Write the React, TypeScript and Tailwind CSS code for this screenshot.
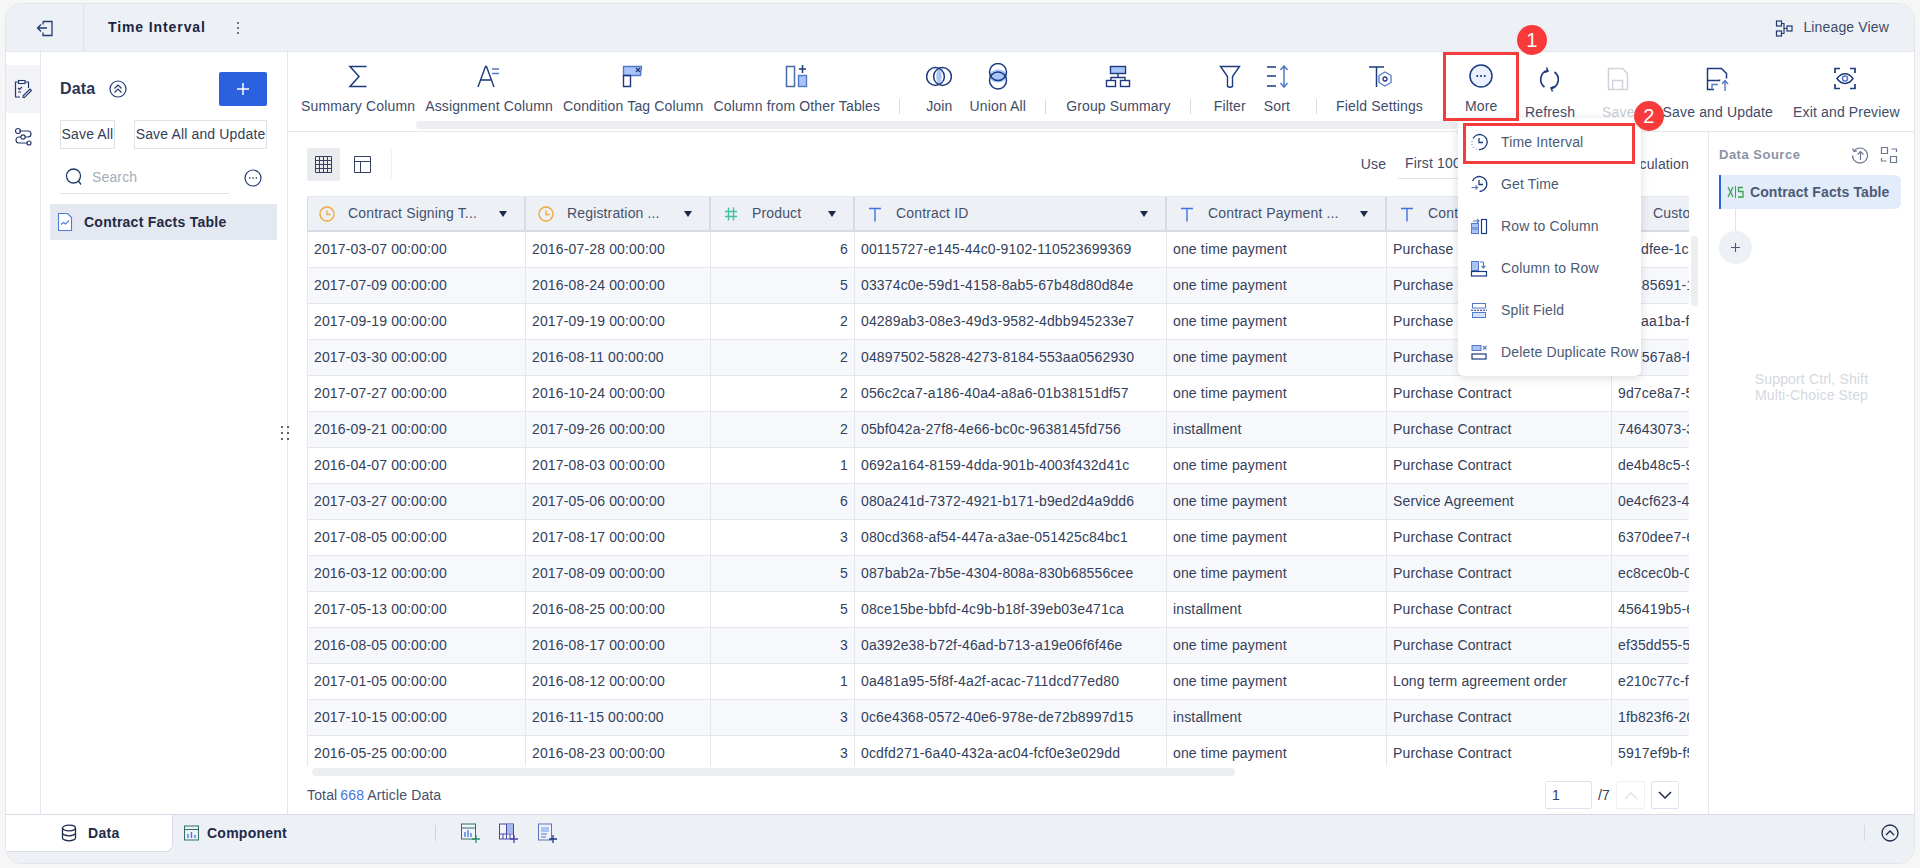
import type { ReactNode } from 'react'

const navy = '#1c3a7d'
const light = '#a9c5f8'
const mid = '#5478c8'

function Ic({ w = 24, h = 24, children, className = '' }: { w?: number; h?: number; children: ReactNode; className?: string }) {
  return (
    <svg width={w} height={h} viewBox={`0 0 ${w} ${h}`} fill="none" className={`shrink-0 ${className}`}>
      {children}
    </svg>
  )
}

const toolIcons: Record<string, ReactNode> = {
  sigma: <path d="M20.500 3.500H4l9 10-9 10h16.500" stroke={navy} strokeWidth="1.500" />,
  assign: (
    <>
      <path d="M2 24 9.500 3.500h1L18 24M4.500 17h11" stroke={navy} strokeWidth="1.400" />
      <path d="M16 6h7M16 10.500h7" stroke={mid} strokeWidth="1.500" />
    </>
  ),
  condition: (
    <>
      <path d="M2.500 3.500h18l-1 9h-17z" fill={light} stroke={mid} strokeWidth="1.400" />
      <path d="M2.500 12.500h7v11h-7z" stroke={navy} strokeWidth="1.400" />
      <path d="m15 5 4 4m0-4-4 4" stroke={navy} strokeWidth="1.200" />
    </>
  ),
  other: (
    <>
      <rect x="2.500" y="3.500" width="8" height="20" stroke="#4b6aa8" strokeWidth="1.500" />
      <rect x="14.500" y="12.500" width="8" height="11" fill={light} stroke={mid} strokeWidth="1.400" />
      <path d="M18.500 2v8M15 6h7" stroke={navy} strokeWidth="1.500" />
    </>
  ),
  join: (
    <>
      <path d="M13 5c3.600 4 3.600 13 0 17-3.600-4-3.600-13 0-17z" fill={light} />
      <circle cx="9.500" cy="13.500" r="8.900" stroke={navy} strokeWidth="1.500" />
      <circle cx="16.500" cy="13.500" r="8.900" stroke={navy} strokeWidth="1.500" />
    </>
  ),
  union: (
    <>
      <ellipse cx="12" cy="13" rx="9" ry="6.500" fill={light} />
      <circle cx="12" cy="9" r="8.500" stroke={navy} strokeWidth="1.500" />
      <circle cx="12" cy="17.500" r="8.500" stroke={navy} strokeWidth="1.500" />
    </>
  ),
  group: (
    <>
      <rect x="5.500" y="3.500" width="15" height="7" fill={light} stroke={navy} strokeWidth="1.400" />
      <rect x="1.500" y="17.500" width="9" height="6" stroke={navy} strokeWidth="1.400" />
      <rect x="15.500" y="17.500" width="9" height="6" stroke={navy} strokeWidth="1.400" />
      <path d="M13 10.500v4M6 17.500v-3h14v3" stroke={navy} strokeWidth="1.400" />
    </>
  ),
  filter: <path d="M2.500 3.500h19l-7 10v10l-2.500 1-2.500-1v-10z" stroke={navy} strokeWidth="1.400" />,
  sort: (
    <>
      <path d="M2 4h9M2 13h9M2 23h9" stroke={navy} strokeWidth="1.500" />
      <path d="M19 3v21m-3.500-17L19 3l3.500 4m-7 13 3.500 4 3.500-4" stroke={mid} strokeWidth="1.500" />
    </>
  ),
  field: (
    <>
      <path d="M1 4h15M8.500 4v20" stroke={navy} strokeWidth="1.500" />
      <path d="m17 9 6 3.500v7L17 23l-6-3.500v-7z" stroke={mid} strokeWidth="1.300" />
      <circle cx="17" cy="16" r="2" stroke={navy} strokeWidth="1.300" />
    </>
  ),
  more: (
    <>
      <circle cx="13" cy="13" r="11" fill="#eaf1fe" stroke={navy} strokeWidth="1.500" />
      <path d="M8.500 13h1.600M12.200 13h1.600M15.900 13h1.600" stroke={navy} strokeWidth="1.800" />
    </>
  ),
  refresh: (
    <>
      <path d="M10 4.500a9.500 9.500 0 0 0-2.500 16.500" stroke={navy} strokeWidth="1.700" />
      <path d="M15 22.500A9.500 9.500 0 0 0 17.500 6" stroke={navy} strokeWidth="1.700" />
      <path d="m9.500 1.500 1.500 3.500-3.500 1.500M15.500 25.500 14 22l3.500-1.500" stroke={navy} strokeWidth="1.500" />
    </>
  ),
  save: (
    <>
      <path d="M3.500 2.500h14l5 5v16h-19z" stroke="#cfd3db" strokeWidth="1.500" />
      <path d="M7.500 23.500v-9h10v9" stroke="#cfd3db" strokeWidth="1.500" />
    </>
  ),
  update: (
    <>
      <path d="M9 23.500H2.500v-21h14l5 5v5" stroke={navy} strokeWidth="1.500" />
      <path d="M2.500 14.500h12v-1" stroke={navy} strokeWidth="1.500" />
      <path d="M20 25v-10m-3 3 3-3.500 3 3.500" stroke={mid} strokeWidth="1.400" />
      <path d="M7 23.500v-5h6" stroke={mid} strokeWidth="1.400" />
    </>
  ),
  preview: (
    <>
      <path d="M2 7V2.500h5M17 2.500h5V7M2 18v4.500h5M17 22.500h5V18" stroke={navy} strokeWidth="1.700" />
      <path d="M4 12.500c4.500-6.500 11.500-6.500 16 0-4.500 6.500-11.500 6.500-16 0z" stroke={navy} strokeWidth="1.500" />
      <circle cx="12" cy="12.500" r="2.500" stroke={mid} strokeWidth="1.500" />
    </>
  ),
}

function ToolItem({ icon, label, w = 24, className = '' }: { icon: string; label: string; w?: number; className?: string }) {
  return (
    <div className={`flex shrink-0 flex-col items-center pt-[10px] ${className}`}>
      <div className="flex h-[28px] items-center justify-center">
        <Ic w={w} h={27}>
          {toolIcons[icon]}
        </Ic>
      </div>
      <span className="mt-[6px] text-[14px] leading-[20px] whitespace-nowrap text-[#3f4c68]">{label}</span>
    </div>
  )
}

function ActionItem({ icon, label, muted, className = '' }: { icon: string; label: string; muted?: boolean; className?: string }) {
  return (
    <div className={`flex shrink-0 flex-col items-center pt-[13px] ${className}`}>
      <div className="flex h-[28px] items-center justify-center">
        <Ic w={26} h={27}>
          {toolIcons[icon]}
        </Ic>
      </div>
      <span className={`mt-[9px] text-[14px] leading-[20px] whitespace-nowrap ${muted ? 'text-[#c9cdd6]' : 'text-[#3f4c68]'}`}>{label}</span>
    </div>
  )
}

function Sep({ className = '' }: { className?: string }) {
  return <div className={`mt-[47px] h-[15px] w-px shrink-0 bg-[#d8dbe3] ${className}`} />
}

function ClockIcon() {
  return (
    <Ic w={16} h={16}>
      <circle cx="8" cy="8" r="7" stroke="#f3a83d" strokeWidth="1.400" />
      <path d="M8 4.500V8.500H11.500" stroke="#f3a83d" strokeWidth="1.300" />
    </Ic>
  )
}

function HashIcon() {
  return (
    <Ic w={16} h={16}>
      <path d="M5.500 1.500v13M10.500 1.500v13M2 5.500h12M2 10.500h12" stroke="#41c0a6" strokeWidth="1.400" />
    </Ic>
  )
}

function TextIcon() {
  return (
    <Ic w={16} h={16}>
      <path d="M2 2.500h12M8 2.500v13" stroke="#3f74e0" strokeWidth="1.400" />
    </Ic>
  )
}

const columns = [
  { title: 'Contract Signing T...', icon: <ClockIcon />, w: 'w-[219px]' },
  { title: 'Registration ...', icon: <ClockIcon />, w: 'w-[185px]' },
  { title: 'Product', icon: <HashIcon />, w: 'w-[144px]' },
  { title: 'Contract ID', icon: <TextIcon />, w: 'w-[312px]' },
  { title: 'Contract Payment ...', icon: <TextIcon />, w: 'w-[220px]' },
  { title: 'Contract Type', icon: <TextIcon />, w: 'w-[225px]' },
  { title: 'Customer ID', icon: <TextIcon />, w: 'w-[200px]' },
]

const rows = [
  ['2017-03-07 00:00:00', '2016-07-28 00:00:00', '6', '00115727-e145-44c0-9102-110523699369', 'one time payment', 'Purchase Contract', 'a1cdfee-1c4a-47b2'],
  ['2017-07-09 00:00:00', '2016-08-24 00:00:00', '5', '03374c0e-59d1-4158-8ab5-67b48d80d84e', 'one time payment', 'Purchase Contract', 'b3485691-1f02-4c7d'],
  ['2017-09-19 00:00:00', '2017-09-19 00:00:00', '2', '04289ab3-08e3-49d3-9582-4dbb945233e7', 'one time payment', 'Purchase Contract', 'c3eaa1ba-f4e1-49a0'],
  ['2017-03-30 00:00:00', '2016-08-11 00:00:00', '2', '04897502-5828-4273-8184-553aa0562930', 'one time payment', 'Purchase Contract', '12e567a8-f0b3-41d6'],
  ['2017-07-27 00:00:00', '2016-10-24 00:00:00', '2', '056c2ca7-a186-40a4-a8a6-01b38151df57', 'one time payment', 'Purchase Contract', '9d7ce8a7-5a21-4e3c'],
  ['2016-09-21 00:00:00', '2017-09-26 00:00:00', '2', '05bf042a-27f8-4e66-bc0c-9638145fd756', 'installment', 'Purchase Contract', '74643073-3c9e-48f1'],
  ['2016-04-07 00:00:00', '2017-08-03 00:00:00', '1', '0692a164-8159-4dda-901b-4003f432d41c', 'one time payment', 'Purchase Contract', 'de4b48c5-9b07-4a12'],
  ['2017-03-27 00:00:00', '2017-05-06 00:00:00', '6', '080a241d-7372-4921-b171-b9ed2d4a9dd6', 'one time payment', 'Service Agreement', '0e4cf623-4d18-47ab'],
  ['2017-08-05 00:00:00', '2017-08-17 00:00:00', '3', '080cd368-af54-447a-a3ae-051425c84bc1', 'one time payment', 'Purchase Contract', '6370dee7-6f42-4b09'],
  ['2016-03-12 00:00:00', '2017-08-09 00:00:00', '5', '087bab2a-7b5e-4304-808a-830b68556cee', 'one time payment', 'Purchase Contract', 'ec8cec0b-0a73-42de'],
  ['2017-05-13 00:00:00', '2016-08-25 00:00:00', '5', '08ce15be-bbfd-4c9b-b18f-39eb03e471ca', 'installment', 'Purchase Contract', '456419b5-6e20-4c18'],
  ['2016-08-05 00:00:00', '2016-08-17 00:00:00', '3', '0a392e38-b72f-46ad-b713-a19e06f6f46e', 'one time payment', 'Purchase Contract', 'ef35dd55-5b81-49c7'],
  ['2017-01-05 00:00:00', '2016-08-12 00:00:00', '1', '0a481a95-5f8f-4a2f-acac-711dcd77ed80', 'one time payment', 'Long term agreement order', 'e210c77c-f6a3-4d50'],
  ['2017-10-15 00:00:00', '2016-11-15 00:00:00', '3', '0c6e4368-0572-40e6-978e-de72b8997d15', 'installment', 'Purchase Contract', '1fb823f6-2019-4ea7'],
  ['2016-05-25 00:00:00', '2016-08-23 00:00:00', '3', '0cdfd271-6a40-432a-ac04-fcf0e3e029dd', 'one time payment', 'Purchase Contract', '5917ef9b-f5c2-4136'],
]

const menuItems: { label: string; icon: ReactNode }[] = [
  {
    label: 'Time Interval',
    icon: (
      <>
        <path d="M3 5.500A7.500 7.500 0 1 1 9 16.500" stroke={navy} strokeWidth="1.300" />
        <path d="M2 8v.8M2 11v.8M3.500 14l.5.500M6 16l.6.200" stroke={mid} strokeWidth="1.300" />
        <path d="M9 5v4.500h4" stroke={navy} strokeWidth="1.300" />
      </>
    ),
  },
  {
    label: 'Get Time',
    icon: (
      <>
        <path d="M2.500 6A7.500 7.500 0 1 1 9.500 16.500" stroke={navy} strokeWidth="1.300" />
        <path d="M9 5v4.500h4" stroke={navy} strokeWidth="1.300" />
        <path d="M1.500 12.500h6m-2-2 2 2-2 2" stroke={mid} strokeWidth="1.200" />
      </>
    ),
  },
  {
    label: 'Row to Column',
    icon: (
      <>
        <rect x="1.500" y="6.500" width="7" height="4.500" fill={light} stroke={mid} />
        <rect x="1.500" y="12" width="7" height="4.500" fill={light} stroke={mid} />
        <rect x="11.500" y="2.500" width="5" height="14" stroke={navy} strokeWidth="1.200" />
        <path d="M3 4h6M7 2l2 2-2 2" stroke={mid} strokeWidth="1.100" />
      </>
    ),
  },
  {
    label: 'Column to Row',
    icon: (
      <>
        <rect x="1.500" y="2.500" width="7" height="9" fill={light} stroke={mid} />
        <rect x="1.500" y="12.500" width="15" height="4.500" stroke={navy} strokeWidth="1.200" />
        <path d="M13.500 3v6M11.500 7l2 2 2-2M10 3h3.500" stroke={mid} strokeWidth="1.100" />
      </>
    ),
  },
  {
    label: 'Split Field',
    icon: (
      <>
        <rect x="2.500" y="2.500" width="13" height="4.500" stroke={mid} />
        <rect x="2.500" y="11.500" width="13" height="5" fill="#d5e2fb" stroke={mid} />
        <path d="M1 9.200h16" stroke={navy} strokeWidth="1.100" strokeDasharray="2 1" />
      </>
    ),
  },
  {
    label: 'Delete Duplicate Row',
    icon: (
      <>
        <rect x="2" y="2.500" width="9" height="5" fill={light} stroke={mid} />
        <rect x="2" y="11" width="14" height="5" stroke={navy} strokeWidth="1.200" />
        <path d="m13 3 3.500 3.500m0-3.500L13 6.500" stroke={mid} strokeWidth="1.100" />
      </>
    ),
  },
]

export default function App() {
  return (
    <div className="relative h-[868px] w-[1920px] overflow-hidden bg-[#f6f6f6] pt-[3px] pl-[5px] font-['Liberation_Sans',sans-serif] text-[14px] tracking-[0.15px] text-[#33405a]">
      <div className="flex h-[861px] w-[1910px] flex-col overflow-hidden rounded-[16px] border border-[#e2e4e9] bg-white">
        {/* Top header */}
        <div className="flex h-[48px] shrink-0 items-center border-b border-[#e4e7ee] bg-[#edf0f5]">
          <div className="flex h-full w-[78px] items-center justify-center border-r border-[#e1e4ea]">
            <Ic w={18} h={18}>
              <path d="M7 2.500h9v14H7v-3M7 5.500v-3M11 9H2m3-3.500L1.500 9 5 12.500" stroke="#24396e" strokeWidth="1.300" />
            </Ic>
          </div>
          <span className="ml-[24px] text-[14px] font-bold tracking-[0.9px] text-[#1a2540]">Time Interval</span>
          <Ic w={4} h={14} className="ml-[30px]">
            <path d="M2 1v2M2 6v2M2 11v2" stroke="#46506a" strokeWidth="1.500" />
          </Ic>
          <div className="ml-auto flex items-center pr-[25px]">
            <Ic w={18} h={18}>
              <rect x="1.500" y="2" width="5" height="5" stroke="#24396e" strokeWidth="1.200" />
              <rect x="1.500" y="12" width="5" height="5" stroke="#24396e" strokeWidth="1.200" />
              <rect x="12" y="7" width="5" height="5" stroke="#24396e" strokeWidth="1.200" />
              <path d="M6.500 4.500H9v10H6.500M9 9.500h3" stroke="#24396e" strokeWidth="1.200" />
            </Ic>
            <span className="ml-[10px] text-[14px] text-[#3f4c68]">Lineage View</span>
          </div>
        </div>

        {/* Main area */}
        <div className="flex h-[762px] shrink-0">
          {/* Rail */}
          <div className="w-[35px] shrink-0 border-r border-[#e4e7ee] pt-[13px]">
            <div className="flex h-[48px] items-center justify-center bg-[#f2f3f6]">
              <Ic w={18} h={20}>
                <path d="M11 3h3.500v6M4 3H1.500v15H6" stroke="#24396e" strokeWidth="1.200" />
                <rect x="4.500" y="1.500" width="6.500" height="3" stroke="#24396e" strokeWidth="1.100" />
                <path d="m9 17 7-7 1.500 1.500-7 7H9zM4 9l1.500 1.500L8 8M4 13h3" stroke="#24396e" strokeWidth="1.100" />
              </Ic>
            </div>
            <div className="flex h-[48px] items-center justify-center">
              <Ic w={18} h={20}>
                <path d="M5 4h9M13 10H5a3 3 0 0 0 0 6h8" stroke="#24396e" strokeWidth="1.200" />
                <circle cx="4" cy="4" r="2.500" stroke="#24396e" strokeWidth="1.200" />
                <circle cx="15" cy="16" r="2" stroke="#24396e" strokeWidth="1.200" />
                <circle cx="9" cy="10" r="2.200" fill="white" stroke="#24396e" strokeWidth="1.200" />
                <path d="M14 4a3 3 0 0 1 0 6h-1" stroke="#24396e" strokeWidth="1.200" />
              </Ic>
            </div>
          </div>

          {/* Data panel */}
          <div className="w-[247px] shrink-0 border-r border-[#e4e7ee] pt-[20px] pr-[20px] pl-[19px]">
            <div className="flex h-[34px] items-center justify-between">
              <div className="flex items-center">
                <span className="text-[16px] font-bold text-[#2a3550]">Data</span>
                <Ic w={18} h={18} className="ml-[14px]">
                  <circle cx="9" cy="9" r="8" stroke="#24396e" strokeWidth="1.200" />
                  <path d="m5.500 8.500 3.500-3.500 3.500 3.500M5.500 12.500 9 9l3.500 3.500" stroke="#24396e" strokeWidth="1.200" />
                </Ic>
              </div>
              <div className="flex h-[34px] w-[48px] items-center justify-center rounded-[2px] bg-[#2b60de]">
                <Ic w={14} h={14}>
                  <path d="M7 1v12M1 7h12" stroke="white" strokeWidth="1.500" />
                </Ic>
              </div>
            </div>
            <div className="mt-[14px] flex h-[29px] justify-between">
              <div className="flex w-[55px] items-center justify-center border border-[#dfe2e8] whitespace-nowrap text-[#33405a]">Save All</div>
              <div className="flex w-[133px] items-center justify-center border border-[#dfe2e8] whitespace-nowrap text-[#33405a]">Save All and Update</div>
            </div>
            <div className="mt-[12px] flex h-[33px] items-center justify-between">
              <div className="flex h-full w-[169px] items-center border-b border-[#dfe2e8] pl-[5px]">
                <Ic w={18} h={20}>
                  <circle cx="8.500" cy="9" r="7" stroke="#24396e" strokeWidth="1.300" />
                  <path d="m13.500 14 2.500 3.500" stroke="#24396e" strokeWidth="1.300" />
                </Ic>
                <span className="ml-[9px] text-[#a6adba]">Search</span>
              </div>
              <Ic w={18} h={18} className="mr-[5px]">
                <circle cx="9" cy="9" r="8" stroke="#24396e" strokeWidth="1.200" />
                <path d="M5 9h1.300M8.400 9h1.300M11.700 9H13" stroke="#24396e" strokeWidth="1.400" />
              </Ic>
            </div>
            <div className="mt-[10px] -ml-[10px] flex h-[36px] w-[227px] items-center bg-[#e4e8f0] pl-[7px]">
              <Ic w={16} h={20}>
                <path d="M1.500 1.500h9l4 4v13h-13z" fill="white" stroke="#4f7be0" strokeWidth="1.100" />
                <path d="m4 12.500 2.500-2 2 1.500 3.500-3.500" stroke="#4f7be0" strokeWidth="1.100" />
              </Ic>
              <span className="ml-[11px] font-bold tracking-[0.25px] whitespace-nowrap text-[#1f2a44]">Contract Facts Table</span>
            </div>
          </div>

          {/* Center + right */}
          <div className="flex min-w-0 flex-1 flex-col">
            {/* Toolbar */}
            <div className="flex h-[80px] shrink-0 border-b border-[#e4e7ee]">
              <div className="ml-[13px] flex w-[1218px] overflow-hidden">
                <div className="flex">
                  <ToolItem icon="sigma" label="Summary Column" />
                  <ToolItem icon="assign" label="Assignment Column" w={26} className="ml-[10px]" />
                  <ToolItem icon="condition" label="Condition Tag Column" className="ml-[10px]" />
                  <ToolItem icon="other" label="Column from Other Tables" w={25} className="ml-[10px]" />
                  <Sep className="ml-[19px]" />
                  <ToolItem icon="join" label="Join" w={26} className="ml-[26px]" />
                  <ToolItem icon="union" label="Union All" className="ml-[17px]" />
                  <Sep className="ml-[19px]" />
                  <ToolItem icon="group" label="Group Summary" w={26} className="ml-[20px]" />
                  <Sep className="ml-[19px]" />
                  <ToolItem icon="filter" label="Filter" className="ml-[23px]" />
                  <ToolItem icon="sort" label="Sort" className="ml-[18px]" />
                  <Sep className="ml-[26px]" />
                  <ToolItem icon="field" label="Field Settings" className="ml-[19px]" />
                  <ToolItem icon="more" label="More" w={26} className="ml-[42px]" />
                </div>
              </div>
              <div className="flex">
                <ActionItem icon="refresh" label="Refresh" className="ml-[6px]" />
                <ActionItem icon="save" label="Save" muted className="ml-[27px]" />
                <ActionItem icon="update" label="Save and Update" className="ml-[28px]" />
                <ActionItem icon="preview" label="Exit and Preview" className="ml-[20px]" />
              </div>
            </div>

            <div className="flex min-h-0 flex-1">
              {/* Table column */}
              <div className="flex w-[1420px] shrink-0 flex-col px-[19px]">
                <div className="flex h-[64px] shrink-0 items-center justify-between">
                  <div className="flex items-center">
                    <div className="flex h-[33px] w-[33px] items-center justify-center rounded-[2px] bg-[#e9ebef]">
                      <Ic w={17} h={17}>
                        <path d="M.5.500h16v16H.5zM.5 4.500h16M.5 8.500h16M.5 12.500h16M4.500.5v16M8.500.5v16M12.500.5v16" stroke="#33415f" />
                      </Ic>
                    </div>
                    <div className="ml-[6px] flex h-[33px] w-[33px] items-center justify-center">
                      <Ic w={17} h={17}>
                        <path d="M.5.500h16v16H.5zM.5 5.500h16M6.500 5.500v11" stroke="#33415f" />
                      </Ic>
                    </div>
                    <div className="ml-[12px] h-[28px] w-px bg-[#eceef2]" />
                  </div>
                  <div className="flex items-center">
                    <span className="text-[#3f4c68]">Use</span>
                    <span className="ml-[12px] flex h-[30px] w-[208px] items-center border-b border-[#dfe2e8] pl-[7px] whitespace-nowrap text-[#3f4c68]">First 1000 Rows</span>
                    <span className="ml-[12px] text-[#3f4c68]">Calculation</span>
                  </div>
                </div>

                {/* Table */}
                <div className="h-[570px] shrink-0 overflow-hidden">
                  <div className="flex h-[36px] w-[1505px] border-y border-b-2 border-y-[#e4e7ee] border-b-[#d7dbe5] bg-[#edf0f5]">
                    {columns.map((col) => (
                      <div key={col.title} className={`flex shrink-0 items-center border-r-2 border-[#d7dbe5] pr-[17px] pl-[12px] first:border-l first:pl-[11px] ${col.w}`}>
                        {col.icon}
                        <span className="ml-[13px] flex-1 text-[14px] whitespace-nowrap text-[#45516c]">{col.title}</span>
                        <div className="h-0 w-0 border-x-[4.500px] border-t-[6px] border-x-transparent border-t-[#1d2a4a]" />
                      </div>
                    ))}
                  </div>
                  {rows.map((row, r) => (
                    <div key={r} className={`flex h-[36px] w-[1505px] border-b border-[#e4e7ee] ${r % 2 ? 'bg-[#f7f8fc]' : 'bg-white'}`}>
                      {row.map((cell, c) => (
                        <div
                          key={c}
                          className={`flex shrink-0 items-center overflow-hidden border-r border-[#e4e7ee] px-[6px] whitespace-nowrap first:border-l ${columns[c].w} ${c === 2 ? 'justify-end' : ''}`}
                        >
                          {cell}
                        </div>
                      ))}
                    </div>
                  ))}
                </div>

                {/* Pagination */}
                <div className="flex h-[48px] shrink-0 items-center justify-between pt-[10px]">
                  <div className="flex text-[#45516c]">
                    <span>Total</span>
                    <span className="ml-[3px] text-[#3f74e0]">668</span>
                    <span className="ml-[3px]">Article Data</span>
                  </div>
                  <div className="mr-[10px] flex items-center">
                    <div className="flex h-[28px] w-[47px] items-center rounded-[2px] border border-[#dfe2e8] pl-[6px] text-[#33405a]">1</div>
                    <span className="ml-[6px] text-[#33405a]">/7</span>
                    <div className="ml-[6px] flex h-[28px] w-[29px] items-center justify-center rounded-[2px] border border-[#eef0f3]">
                      <Ic w={14} h={9}>
                        <path d="m1 8 6-6 6 6" stroke="#dfe2e8" strokeWidth="1.400" />
                      </Ic>
                    </div>
                    <div className="ml-[6px] flex h-[28px] w-[28px] items-center justify-center rounded-[2px] border border-[#dfe2e8]">
                      <Ic w={14} h={9}>
                        <path d="m1 1 6 6 6-6" stroke="#1d2a4a" strokeWidth="1.500" />
                      </Ic>
                    </div>
                  </div>
                </div>
              </div>

              {/* Data source panel */}
              <div className="flex-1 border-l border-[#e4e7ee] pt-[13px] pl-[10px]">
                <div className="flex h-[20px] w-[182px] items-center">
                  <span className="text-[13px] font-bold tracking-[0.5px] whitespace-nowrap text-[#8a93a6]">Data Source</span>
                  <Ic w={18} h={18} className="ml-auto">
                    <path d="M3 5a7.500 7.500 0 1 1-1.500 4.500M1.500 2.500 3 5.500l3-.5" stroke="#6d7892" strokeWidth="1.200" />
                    <path d="M9.500 14V5.500M6.500 8.500l3-3 3 3" stroke="#6d7892" strokeWidth="1.200" />
                  </Ic>
                  <Ic w={18} h={18} className="mr-[3px] ml-[11px]">
                    <path d="M1.500 1.500h6v6h-6zM10.500 10.500h6v6h-6zM1.500 12v3h5M16.500 6V3h-5" stroke="#6d7892" strokeWidth="1.200" />
                  </Ic>
                </div>
                <div className="mt-[10px] flex h-[34px] w-[182px] items-center rounded-r-[6px] border-l-2 border-[#2b60de] bg-[#e3ecfb] pl-[6px]">
                  <Ic w={17} h={14}>
                    <path d="m1 2 5 10M6 2 1 12" stroke="#3aa34a" strokeWidth="1.300" />
                    <path d="M8.500 1v12" stroke="#3aa34a" strokeWidth="1" />
                    <path d="M16 2.500h-4.500v4H16V12h-5" stroke="#3aa34a" strokeWidth="1.300" />
                  </Ic>
                  <span className="ml-[6px] font-bold tracking-[0.1px] whitespace-nowrap text-[#4c5a75]">Contract Facts Table</span>
                </div>
                <div className="ml-[16px] h-[22px] w-px bg-[#e0e3e9]" />
                <div className="flex h-[33px] w-[33px] items-center justify-center rounded-full bg-[#edf0f5]">
                  <Ic w={11} h={11}>
                    <path d="M5.500 1v9M1 5.500h9" stroke="#4c5a75" strokeWidth="1.100" />
                  </Ic>
                </div>
                <div className="mt-[107px] -ml-[10px] text-center text-[14px] leading-[16px] text-[#d5d8de]">
                  <div>Support Ctrl, Shift</div>
                  <div>Multi-Choice Step</div>
                </div>
              </div>
            </div>
          </div>
        </div>

        {/* Footer */}
        <div className="flex h-[49px] shrink-0 border-t border-[#d8dbe6] bg-[#edf0f5]">
          <div className="flex h-[37px] w-[167px] shrink-0 items-center rounded-br-[8px] border-r border-b border-[#d8dbe6] bg-white pl-[55px]">
            <Ic w={16} h={18}>
              <ellipse cx="8" cy="4" rx="6.500" ry="2.800" stroke="#1d2a4a" strokeWidth="1.300" />
              <path d="M1.500 4v10c0 1.500 3 2.800 6.500 2.800s6.500-1.300 6.500-2.800V4M1.500 9c0 1.500 3 2.800 6.500 2.800s6.500-1.300 6.500-2.800" stroke="#1d2a4a" strokeWidth="1.300" />
            </Ic>
            <span className="ml-[11px] font-bold tracking-[0.3px] text-[#1d2a4a]">Data</span>
          </div>
          <div className="mb-[12px] ml-[11px] flex items-center">
            <Ic w={15} h={16}>
              <rect x=".5" y="1" width="14" height="14" stroke="#2f6f66" />
              <path d="M.5 4.500h14" stroke="#2f6f66" />
              <path d="M4 13V9M7.500 13V7M11 13v-3" stroke="#3f74e0" strokeWidth="1.300" />
            </Ic>
            <span className="ml-[8px] font-bold tracking-[0.25px] text-[#1d2a4a]">Component</span>
            <div className="ml-[148px] h-[16px] w-px bg-[#cfd3db]" />
            <Ic w={20} h={20} className="ml-[24px]">
              <rect x="1.500" y="1" width="14" height="15" fill="#f2f5f9" stroke="#2f6f66" />
              <path d="M1.500 5h14" stroke="#2f6f66" />
              <path d="M5 14V9M8 14V7M11 14v-4" stroke="#3f74e0" strokeWidth="1.300" />
              <path d="M16 12v8M12 16h8" stroke="#2f8f6f" strokeWidth="1.300" />
            </Ic>
            <Ic w={20} h={20} className="ml-[18px]">
              <rect x="1.500" y="1" width="14" height="15" fill="#f2f5f9" stroke="#4a46a8" />
              <path d="M1.500 11h14M8.500 1v15M5 11v5M12 11v5" stroke="#4a46a8" />
              <path d="M9 1.500h6v9H9z" fill="#a9b7ee" />
              <path d="M16 12v8M12 16h8" stroke="#4a46a8" strokeWidth="1.300" />
            </Ic>
            <Ic w={20} h={20} className="ml-[19px]">
              <rect x="1.500" y="1" width="13" height="16" fill="#eef2f8" stroke="#5a78b8" />
              <rect x="4" y="4" width="8" height="5" fill="#a9c5f8" />
              <path d="M4 11h6M4 14h5" stroke="#5a78b8" />
              <path d="M16 12v8M12 16h8" stroke="#1c3a7d" strokeWidth="1.300" />
            </Ic>
          </div>
          <div className="mr-[15px] mb-[12px] ml-auto flex items-center">
            <div className="h-[16px] w-px bg-[#d4d8e0]" />
            <Ic w={18} h={18} className="ml-[16px]">
              <circle cx="9" cy="9" r="8" stroke="#1d2a4a" strokeWidth="1.300" />
              <path d="m5 11 4-4 4 4" stroke="#1d2a4a" strokeWidth="1.300" />
            </Ic>
          </div>
        </div>
      </div>

      {/* Overlay scrollbars */}
      <div className="absolute top-[121px] left-[416px] h-[8px] w-[1041px] rounded-full bg-[#eceef1]" />
      <div className="absolute top-[768px] left-[312px] h-[8px] w-[923px] rounded-full bg-[#eceef1]" />
      <div className="absolute top-[236px] left-[1691px] h-[70px] w-[7px] rounded-full bg-[#eceef1]" />

      {/* Drag handle */}
      <div className="absolute top-[426px] left-[281px] grid grid-cols-2 gap-x-[4px] gap-y-[4px]">
        {[0, 1, 2, 3, 4, 5].map((i) => (
          <div key={i} className="h-[2px] w-[2px] bg-[#5b6578]" />
        ))}
      </div>

      {/* Dropdown menu */}
      <div className="absolute top-[118px] left-[1458px] w-[183px] rounded-[6px] bg-white py-[3px] shadow-[0_2px_10px_rgba(30,40,70,0.16)]">
        {menuItems.map((item) => (
          <div key={item.label} className="flex h-[42px] items-center pl-[12px] whitespace-nowrap text-[#4c5a75]">
            <Ic w={18} h={18}>
              {item.icon}
            </Ic>
            <span className="ml-[13px]">{item.label}</span>
          </div>
        ))}
      </div>

      {/* Annotations */}
      <div className="absolute top-[52px] left-[1443px] h-[69px] w-[76px] border-[3px] border-[#f53c3c]" />
      <div className="absolute top-[123px] left-[1463px] h-[41px] w-[172px] border-[3px] border-[#f53c3c]" />
      <div className="absolute top-[25px] left-[1517px] flex h-[30px] w-[30px] items-center justify-center rounded-full bg-[#f93a3a] text-[20px] text-white">1</div>
      <div className="absolute top-[101px] left-[1634px] flex h-[30px] w-[30px] items-center justify-center rounded-full bg-[#f93a3a] text-[20px] text-white">2</div>
    </div>
  )
}
